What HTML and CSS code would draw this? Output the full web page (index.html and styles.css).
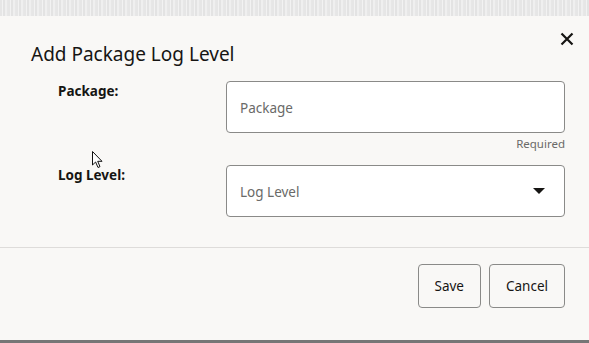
FILE: index.html
```html
<!DOCTYPE html>
<html lang="en">
<head>
<meta charset="UTF-8">
<meta name="viewport" content="width=device-width, initial-scale=1.0">
<title>Add Package Log Level</title>
<link rel="stylesheet" href="styles.css">
</head>
<body>
<div class="backdrop"></div>
<div class="dialog">
  <div class="dialog-header">
    <h1 class="dialog-title">Add Package Log Level</h1>
    <button class="close-btn" aria-label="Close">
      <svg width="14" height="14" viewBox="0 0 14 14">
        <path d="M1.5 1.5 L12.5 12.5 M12.5 1.5 L1.5 12.5" stroke="#161513" stroke-width="2.2" fill="none"/>
      </svg>
    </button>
  </div>
  <div class="dialog-body">
    <div class="form-row">
      <label class="form-label" for="package">Package:</label>
      <div class="form-field">
        <input type="text" id="package" class="text-input" placeholder="Package">
        <div class="helper">Required</div>
      </div>
    </div>
    <div class="form-row">
      <label class="form-label" for="level">Log Level:</label>
      <div class="form-field">
        <div class="select-input" id="level">
          <span class="select-value">Log Level</span>
          <span class="select-arrow"></span>
        </div>
      </div>
    </div>
  </div>
  <div class="dialog-footer">
    <button class="btn">Save</button>
    <button class="btn">Cancel</button>
  </div>
  <svg class="cursor" width="12" height="18" viewBox="0 0 12 18">
    <path d="M0.5 0.5 L0.5 14 L3.6 11 L6 16.5 L8 15.6 L5.7 10.3 L10 10.3 Z" fill="#fff" stroke="#111" stroke-width="1"/>
  </svg>
</div>
<div class="taskbar"></div>
</body>
</html>
```

FILE: styles.css
```css
body {
  margin: 0;
  font-family: "Noto Sans", "Open Sans", sans-serif;
  color: #161513;
  background: #f9f8f6;
}
.backdrop {
  height: 16px;
  background-color: #e9e9e9;
  background-image: repeating-linear-gradient(90deg, #e6e6e6 0 2px, #f2f2f2 2px 3px, #e3e3e3 3px 5px, #efefef 5px 7px, #e7e7e7 7px 8px);
}
.dialog {
  position: relative;
  background: #f9f8f6;
  height: 324px;
  display: flex;
  flex-direction: column;
}
.dialog-header {
  display: flex;
  justify-content: space-between;
  align-items: flex-start;
  padding: 0 14px 0 31px;
}
.dialog-title {
  margin: 26px 0 0;
  font-size: 19px;
  font-weight: 400;
  line-height: 24px;
}
.close-btn {
  margin-top: 15px;
  width: 16px;
  height: 16px;
  padding: 1px;
  border: none;
  background: none;
  cursor: pointer;
}
.dialog-body {
  padding: 15px 24px 0 58px;
  flex: 1;
}
.form-row {
  display: grid;
  grid-template-columns: 168px 1fr;
  margin-bottom: 13px;
}
.form-label {
  font-size: 13.5px;
  font-weight: 700;
  line-height: 20px;
}
.text-input,
.select-input {
  box-sizing: border-box;
  width: 100%;
  height: 52px;
  margin: 0;
  padding: 0 13px;
  border: 1px solid #8a8a88;
  border-radius: 4px;
  background: #fff;
  font-family: inherit;
  font-size: 13.5px;
  color: #161513;
}
.text-input {
  display: block;
  padding-top: 2px;
}
.text-input::placeholder {
  color: #6a6a68;
}
.select-input {
  display: flex;
  align-items: center;
  justify-content: space-between;
  padding-right: 19px;
}
.select-value {
  color: #6a6a68;
  padding-top: 2px;
}
.select-arrow {
  width: 0;
  height: 0;
  border-left: 6px solid transparent;
  border-right: 6px solid transparent;
  border-top: 6px solid #161513;
}
.helper {
  text-align: right;
  font-size: 11.5px;
  line-height: 16px;
  color: #6a6a68;
  margin-top: 3px;
}
.dialog-footer {
  display: flex;
  justify-content: flex-end;
  gap: 8px;
  border-top: 1px solid #dedcda;
  padding: 16px 24px 32px;
}
.btn {
  box-sizing: border-box;
  height: 44px;
  padding: 0 16px;
  border: 1px solid #8a8a88;
  border-radius: 4px;
  background: #f9f8f6;
  font-family: inherit;
  font-size: 13.5px;
  color: #161513;
  cursor: pointer;
}
.cursor {
  position: absolute;
  left: 92px;
  top: 135px;
}
.taskbar {
  height: 3px;
  background: #767676;
}
```
